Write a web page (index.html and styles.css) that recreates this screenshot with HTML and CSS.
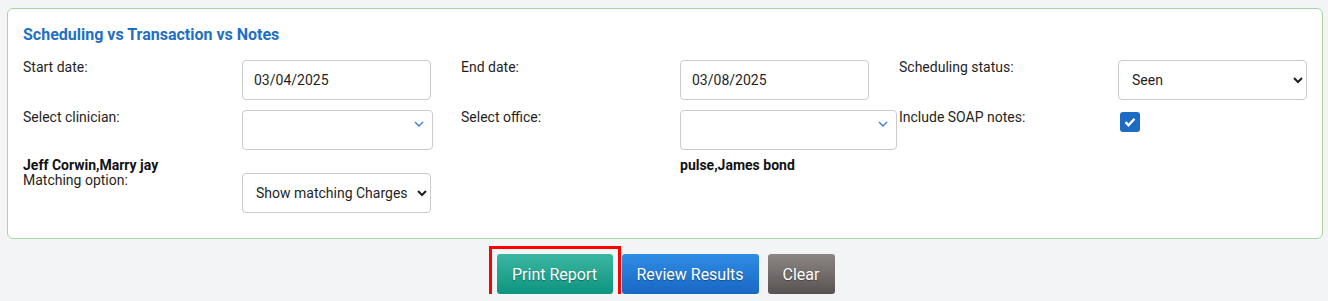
FILE: index.html
```html
<!DOCTYPE html>
<html lang="en">
<head>
    <meta charset="UTF-8">
    <meta name="viewport" content="width=device-width, initial-scale=1.0">
    <title>Scheduling vs Transaction vs Notes</title>
    <link rel="stylesheet" href="styles.css">
</head>
<body>
    <section class="panel">
        <h3 class="panelTitle">Scheduling vs Transaction vs Notes</h3>

        <div class="formRow">
            <div class="field">
                <label class="fieldLabel" for="startDate">Start date:</label>
                <input class="textInput" type="text" id="startDate" value="03/04/2025">
            </div>
            <div class="field">
                <label class="fieldLabel" for="endDate">End date:</label>
                <input class="textInput" type="text" id="endDate" value="03/08/2025">
            </div>
            <div class="field">
                <label class="fieldLabel" for="status">Scheduling status:</label>
                <select class="selectInput" id="status">
                    <option>Seen</option>
                    <option>Scheduled</option>
                    <option>Cancelled</option>
                </select>
            </div>
        </div>

        <div class="formRow rowTwo">
            <div class="field">
                <span class="fieldLabel">Select clinician:</span>
                <div class="multiSelect">
                    <svg class="chevron" width="10" height="6" viewBox="0 0 10 6"><path d="M1 1l4 4 4-4" fill="none" stroke="#3b7fd0" stroke-width="1.4"/></svg>
                </div>
            </div>
            <div class="field">
                <span class="fieldLabel">Select office:</span>
                <div class="multiSelect wide">
                    <svg class="chevron" width="10" height="6" viewBox="0 0 10 6"><path d="M1 1l4 4 4-4" fill="none" stroke="#3b7fd0" stroke-width="1.4"/></svg>
                </div>
            </div>
            <div class="field">
                <span class="fieldLabel">Include SOAP notes:</span>
                <div>
                    <span class="checkBox">
                        <svg width="12" height="10" viewBox="0 0 12 10"><path d="M1.5 5.2l3 3 6-6.4" fill="none" stroke="#fff" stroke-width="2.4"/></svg>
                    </span>
                </div>
            </div>
        </div>

        <div class="formRow noteRow">
            <div class="field">
                <span class="picked">Jeff Corwin,Marry jay</span>
            </div>
            <div class="field">
                <span></span>
                <span class="picked">pulse,James bond</span>
            </div>
        </div>

        <div class="formRow">
            <div class="field">
                <label class="fieldLabel" for="matching">Matching option:</label>
                <select class="selectInput" id="matching">
                    <option>Show matching Charges</option>
                    <option>Show unmatched Charges</option>
                </select>
            </div>
        </div>
    </section>

    <div class="actions">
        <span class="highlight">
            <button class="btn btnPrint">Print Report</button>
        </span>
        <button class="btn btnReview">Review Results</button>
        <button class="btn btnClear">Clear</button>
    </div>
</body>
</html>
```

FILE: styles.css
```css
* {
    margin: 0;
    padding: 0;
    box-sizing: border-box;
}

body {
    font-family: Roboto, 'Liberation Sans', sans-serif;
    font-size: 14px;
    background-color: #f3f4f6;
    color: #1f1f1f;
}

.panel {
    margin: 8px 5px 0 7px;
    padding: 16px 15px 25px 15px;
    background-color: #fff;
    border: 1px solid #a6d5a3;
    border-radius: 6px;
    height: 231px;
}

.panelTitle {
    font-size: 16px;
    line-height: 19px;
    font-weight: 700;
    color: #1f6fc4;
    margin-bottom: 16px;
}

.formRow {
    display: grid;
    grid-template-columns: 408px 408px 408px;
    column-gap: 30px;
}

.field {
    display: grid;
    grid-template-columns: 219px 1fr;
    align-items: start;
}

.rowTwo {
    margin-top: 10px;
}

.fieldLabel {
    line-height: 16px;
    margin-top: -1px;
}

.textInput,
.selectInput {
    width: 189px;
    height: 40px;
    border: 1px solid #cbcbcb;
    border-radius: 4px;
    padding: 0 11px;
    font-family: Roboto, 'Liberation Sans', sans-serif;
    font-size: 14px;
    color: #1f1f1f;
    background-color: #fff;
}

.selectInput {
    padding: 0 4px 0 9px;
}

.multiSelect {
    width: 191px;
    height: 40px;
    border: 1px solid #cbcbcb;
    border-radius: 4px;
    position: relative;
}

.multiSelect.wide {
    width: 217px;
}

.chevron {
    position: absolute;
    right: 8px;
    top: 10px;
}

.checkBox {
    display: flex;
    align-items: center;
    justify-content: center;
    width: 20px;
    height: 20px;
    margin: 2px 0 0 2px;
    background-color: #1d6bc2;
    border-radius: 3px;
}

.noteRow {
    margin-top: 7px;
}

.picked {
    font-weight: 700;
    line-height: 16px;
    color: #111;
}

.actions {
    display: flex;
    justify-content: center;
    align-items: center;
    margin-top: 15px;
    gap: 9px;
    padding-left: 3px;
}

.highlight {
    display: inline-block;
    outline: 3px solid #f00;
    outline-offset: 5px;
}

.btn {
    display: block;
    height: 40px;
    padding: 0;
    border: none;
    border-radius: 3px;
    color: #fff;
    font-family: Roboto, 'Liberation Sans', sans-serif;
    font-size: 16px;
    white-space: nowrap;
    text-shadow: 0 1px 1px rgba(0, 0, 0, 0.35);
    cursor: pointer;
}

.btnPrint {
    width: 116px;
    background: linear-gradient(#3cb6a2, #0d9480);
}

.btnReview {
    width: 137px;
    background: linear-gradient(#2f8de4, #1867c4);
}

.btnClear {
    width: 67px;
    background: linear-gradient(#8d8684, #575251);
}
```
